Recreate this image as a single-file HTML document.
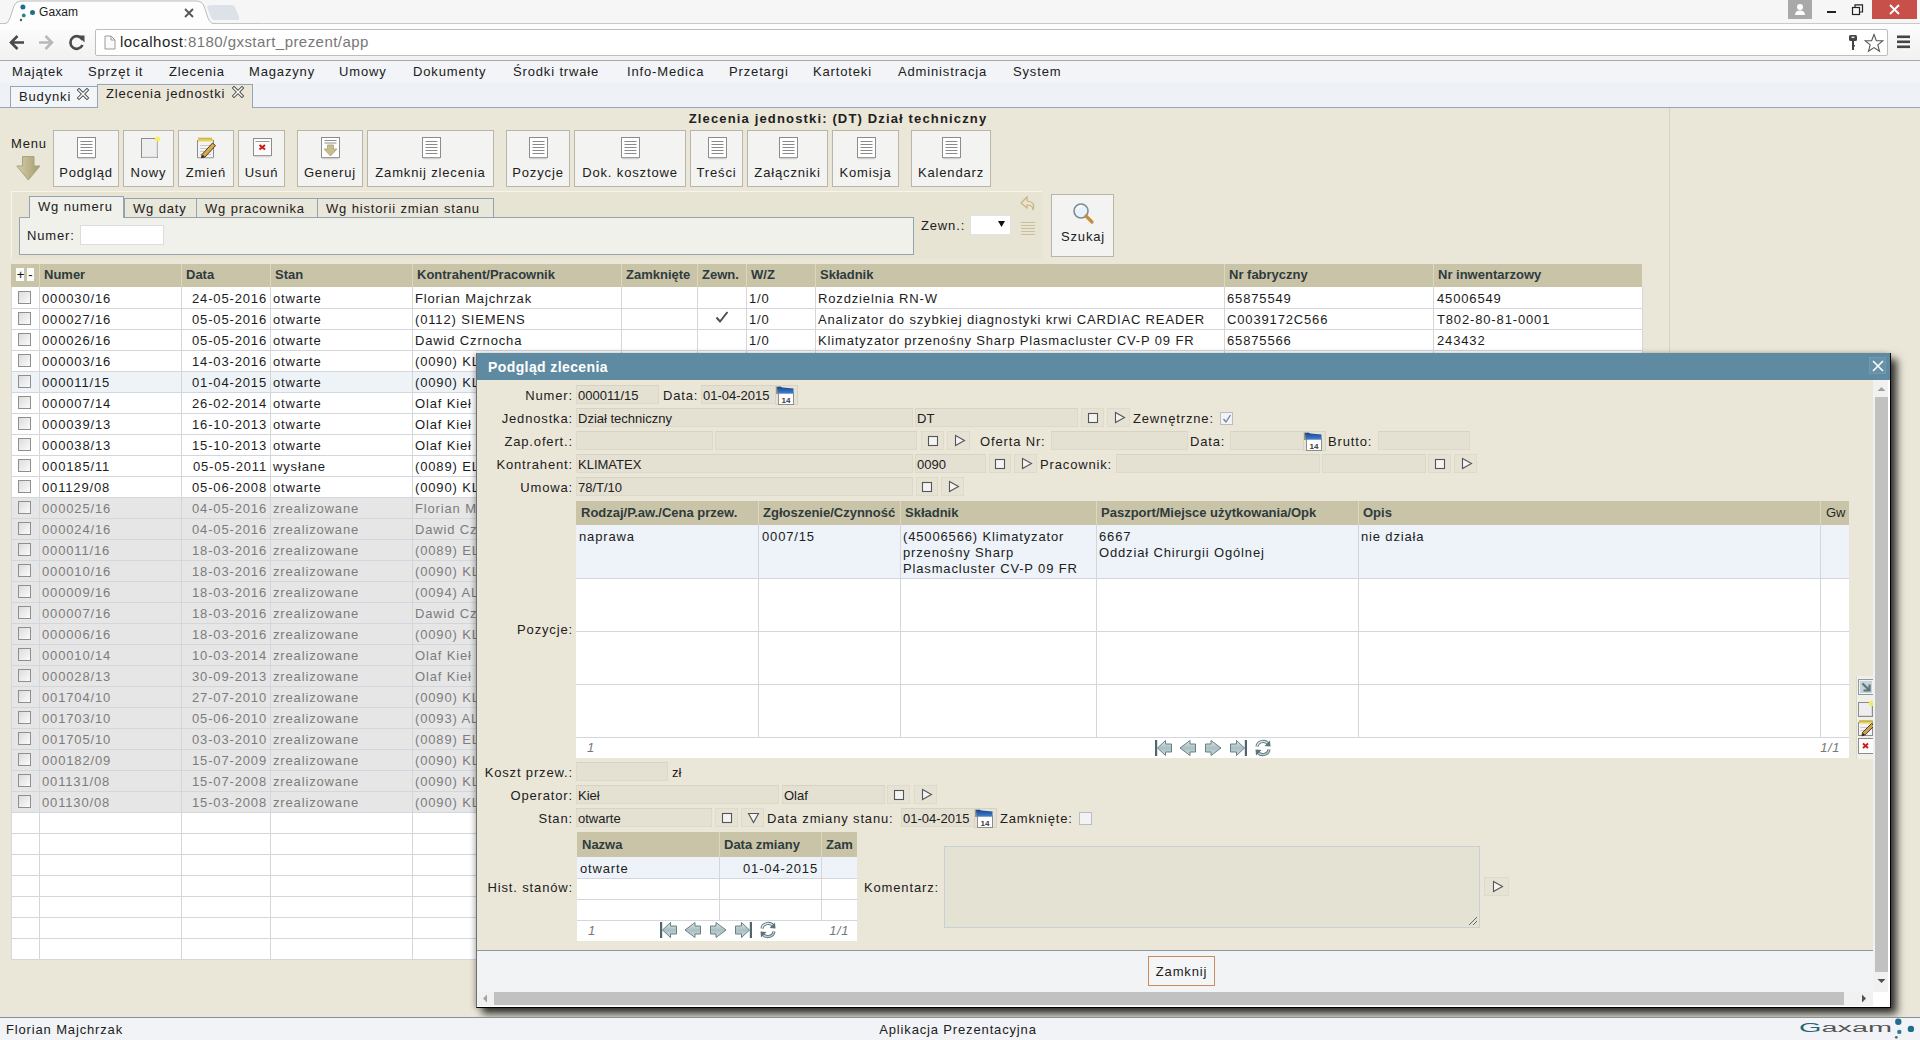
<!DOCTYPE html><html><head><meta charset="utf-8"><title>Gaxam</title><style>
*{margin:0;padding:0;box-sizing:border-box}
html,body{width:1920px;height:1040px;overflow:hidden;background:#ebe7d8;font-family:"Liberation Sans",sans-serif}
.a{position:absolute}
.t{position:absolute;white-space:nowrap;font-size:13px;line-height:16px;color:#202020}
.v{letter-spacing:.85px}
.ar{letter-spacing:0}
.hb{font-weight:bold;color:#2f3b3c;letter-spacing:0}
.g{color:#808080}
svg{position:absolute;overflow:visible}
</style></head><body>
<div class="a" style="left:0px;top:0px;width:1920px;height:60px;background:#f6f6f6"></div>
<div class="a" style="left:0px;top:23px;width:1920px;height:38px;background:linear-gradient(#fdfdfd,#f1f1f1);border-top:1px solid #c9c9c9"></div>
<svg style="left:0;top:0" width="260" height="30"><path d="M0 24 L4 24 Q8 24 10 18 L14 6 Q16 1 22 1 L196 1 Q202 1 204 6 L208 18 Q210 24 216 24 L260 24" fill="#fdfdfd" stroke="#bdbdbd" stroke-width="1"/><rect x="0" y="24" width="260" height="6" fill="#fdfdfd"/><path d="M207 7 Q208 5 211 5 L231 5 Q234 5 235 7 L239 17 Q240 20 237 20 L215 20 Q212 20 211 17 Z" fill="#dde1e8"/></svg>
<svg style="left:18;top:2" width="20" height="22"><circle cx="4.9" cy="5.1" r="2.5" fill="#1f6e8c"/><circle cx="14.5" cy="10.5" r="2.5" fill="#1f6e8c"/><circle cx="5.75" cy="13.4" r="1.9" fill="#2b7f90"/><circle cx="3" cy="18" r="1.2" fill="#555"/></svg>
<div class="t" style="left:39px;top:5px;font-size:12px;line-height:14px;color:#222;letter-spacing:.1px">Gaxam</div>
<svg style="left:183;top:7" width="12" height="12"><path d="M2 2 L10 10 M10 2 L2 10" stroke="#555" stroke-width="1.8"/></svg>
<div class="a" style="left:1788px;top:0px;width:24px;height:19px;background:#a9a9a9"></div>
<svg style="left:1794;top:3" width="12" height="13"><circle cx="6" cy="4" r="3" fill="#fff"/><path d="M1 12 Q1 7.5 6 7.5 Q11 7.5 11 12 Z" fill="#fff"/></svg>
<div class="a" style="left:1827px;top:11px;width:9px;height:2px;background:#222"></div>
<svg style="left:1852;top:4" width="12" height="12"><rect x="0.5" y="3.5" width="7" height="7" fill="none" stroke="#222" stroke-width="1.2"/><path d="M3 3.5 V0.8 H10.5 V8 H8" fill="none" stroke="#222" stroke-width="1.2"/></svg>
<div class="a" style="left:1872px;top:0px;width:45px;height:19px;background:#c7504b"></div>
<svg style="left:1889;top:4" width="12" height="11"><path d="M1 1 L10 10 M10 1 L1 10" stroke="#fff" stroke-width="1.8"/></svg>
<svg style="left:8;top:33" width="80" height="20"><path d="M3 9.5 H16 M9.5 3 L3 9.5 L9.5 16" fill="none" stroke="#4a4a4a" stroke-width="2.6"/><path d="M31 9.5 H44 M37.5 3 L44 9.5 L37.5 16" fill="none" stroke="#b9b9b9" stroke-width="2.6"/><path d="M79.5 7 A6.3 6.3 0 1 0 79.5 12" fill="none" stroke="#4a4a4a" stroke-width="2.6" transform="translate(-5,0)"/><path d="M70 2 L77 2 L77 9 Z" fill="#4a4a4a" transform="translate(-0.5,0.5)"/></svg>
<div class="a" style="left:95px;top:29px;width:1793px;height:27px;background:#fff;border:1px solid #bdbdbd;border-radius:2px"></div>
<svg style="left:104;top:35" width="12" height="15"><path d="M1 1 H7 L11 5 V14 H1 Z M7 1 V5 H11" fill="#fafafa" stroke="#9a9a9a" stroke-width="1"/></svg>
<div class="t" style="left:120px;top:33px;font-size:15px;line-height:18px;color:#222;letter-spacing:.45px">localhost<span style="color:#777">:8180/gxstart_prezent/app</span></div>
<svg style="left:1846;top:34" width="14" height="18"><rect x="3" y="1" width="8" height="6" rx="1.5" fill="#444"/><rect x="5.5" y="2.5" width="3" height="1.6" fill="#ddd"/><rect x="6" y="7" width="2" height="9" fill="#444"/><rect x="7" y="11" width="2" height="1.5" fill="#444"/></svg>
<svg style="left:1864;top:33" width="20" height="20"><path d="M10 1.5 L12.4 7.6 L18.8 7.8 L13.8 11.9 L15.5 18.2 L10 14.6 L4.5 18.2 L6.2 11.9 L1.2 7.8 L7.6 7.6 Z" fill="#fff" stroke="#555" stroke-width="1.1"/></svg>
<svg style="left:1897;top:35" width="14" height="14"><rect x="0" y="0.5" width="13" height="2.6" fill="#444"/><rect x="0" y="5.5" width="13" height="2.6" fill="#444"/><rect x="0" y="10.5" width="13" height="2.6" fill="#444"/></svg>
<div class="a" style="left:0px;top:60px;width:1920px;height:1px;background:#a9a9a9"></div>
<div class="a" style="left:0px;top:61px;width:1920px;height:22px;background:#f2f4f7"></div>
<div class="t v" style="left:12px;top:63.70px;">Majątek</div>
<div class="t v" style="left:88px;top:63.70px;">Sprzęt it</div>
<div class="t v" style="left:169px;top:63.70px;">Zlecenia</div>
<div class="t v" style="left:249px;top:63.70px;">Magazyny</div>
<div class="t v" style="left:339px;top:63.70px;">Umowy</div>
<div class="t v" style="left:413px;top:63.70px;">Dokumenty</div>
<div class="t v" style="left:513px;top:63.70px;">Środki trwałe</div>
<div class="t v" style="left:627px;top:63.70px;">Info-Medica</div>
<div class="t v" style="left:729px;top:63.70px;">Przetargi</div>
<div class="t v" style="left:813px;top:63.70px;">Kartoteki</div>
<div class="t v" style="left:898px;top:63.70px;">Administracja</div>
<div class="t v" style="left:1013px;top:63.70px;">System</div>
<div class="a" style="left:0px;top:83px;width:1920px;height:25px;background:#eef2f7;border-bottom:1px solid #97a6b4"></div>
<div class="a" style="left:10px;top:86px;width:88px;height:22px;background:#f3f6f9;border:1px solid #97a6b4"></div>
<div class="t v" style="left:19px;top:88.70px;">Budynki</div>
<div class="a" style="left:97px;top:84px;width:156px;height:24px;background:#ebe7d8;border:1px solid #97a6b4;border-bottom:none"></div>
<div class="t v" style="left:106px;top:85.70px;">Zlecenia jednostki</div>
<svg style="left:77;top:88" width="13" height="13"><path d="M2 2 L10 10 M10 2 L2 10" stroke="#444" stroke-width="3.2" stroke-linecap="square"/><path d="M2 2 L10 10 M10 2 L2 10" stroke="#fff" stroke-width="1.5" stroke-linecap="square"/></svg>
<svg style="left:232;top:86" width="13" height="13"><path d="M2 2 L10 10 M10 2 L2 10" stroke="#444" stroke-width="3.2" stroke-linecap="square"/><path d="M2 2 L10 10 M10 2 L2 10" stroke="#fff" stroke-width="1.5" stroke-linecap="square"/></svg>
<div class="a" style="left:1669px;top:108px;width:1px;height:899px;background:#d6d2c3"></div>
<div class="t v" style="left:588.0px;width:500px;top:110.70px;text-align:center;font-weight:bold;letter-spacing:1.15px">Zlecenia jednostki: (DT) Dział techniczny</div>
<div class="t v" style="left:11px;top:135.70px;">Menu</div>
<svg style="left:16;top:155" width="26" height="27"><defs><linearGradient id="ag" x1="0" x2="1"><stop offset="0" stop-color="#d8cfa9"/><stop offset="1" stop-color="#a39a6f"/></linearGradient></defs><path d="M6.5 1.5 H18 V11 H24 L12.3 25 L0.8 11 H6.5 Z" fill="url(#ag)" stroke="#a9a27f" stroke-width="1"/></svg>
<div class="a" style="left:53px;top:130px;width:66px;height:57px;background:#f3f3f1;border:1px solid #b9b6a9"></div>
<svg style="left:76.0;top:137" width="22" height="24"><rect x="1.5" y="0.5" width="18" height="20" fill="#fff" stroke="#8c8c8c"/><path d="M2 21.5 H19" stroke="#cfcfcf" stroke-width="1.5"/><path d="M4.5 4.5 H16.5" stroke="#8a8a8a" stroke-width="1"/><path d="M4.5 7.5 H16.5" stroke="#8a8a8a" stroke-width="1"/><path d="M4.5 10.5 H16.5" stroke="#8a8a8a" stroke-width="1"/><path d="M4.5 13.5 H16.5" stroke="#8a8a8a" stroke-width="1"/><path d="M4.5 16.5 H16.5" stroke="#8a8a8a" stroke-width="1"/></svg>
<div class="t v" style="left:53.0px;width:66px;top:164.70px;text-align:center;">Podgląd</div>
<div class="a" style="left:123px;top:130px;width:51px;height:57px;background:#f3f3f1;border:1px solid #b9b6a9"></div>
<svg style="left:138.5;top:137" width="22" height="24"><rect x="2.5" y="1.5" width="16" height="19" fill="#eeeeee" stroke="#8c8c8c"/><path d="M3 20 L18 20 L18 5" fill="none" stroke="#d5d5d5"/><circle cx="18.5" cy="2" r="2.6" fill="#f7ef6a"/></svg>
<div class="t v" style="left:123.0px;width:51px;top:164.70px;text-align:center;">Nowy</div>
<div class="a" style="left:178px;top:130px;width:56px;height:57px;background:#f3f3f1;border:1px solid #b9b6a9"></div>
<svg style="left:196.0;top:137" width="22" height="24"><rect x="1.5" y="3.5" width="16" height="17" fill="#f4f4f4" stroke="#8c8c8c"/><path d="M2 21 H18" stroke="#c8c8c8" stroke-width="1.2"/><path d="M4 8.5 H15" stroke="#c9c9c9" stroke-width="1"/><path d="M4 11.5 H15" stroke="#c9c9c9" stroke-width="1"/><path d="M4 14.5 H15" stroke="#c9c9c9" stroke-width="1"/><path d="M4 17.5 H15" stroke="#c9c9c9" stroke-width="1"/><rect x="2" y="2" width="15" height="2.5" fill="#e8d35a"/><circle cx="3" cy="1.6" r="1" fill="#c8b23a"/><circle cx="5" cy="1.6" r="1" fill="#c8b23a"/><circle cx="7" cy="1.6" r="1" fill="#c8b23a"/><circle cx="9" cy="1.6" r="1" fill="#c8b23a"/><circle cx="11" cy="1.6" r="1" fill="#c8b23a"/><circle cx="13" cy="1.6" r="1" fill="#c8b23a"/><circle cx="15" cy="1.6" r="1" fill="#c8b23a"/><path d="M6 17.5 L16.5 6 L19.5 8.6 L9 20 L5.5 20.8 Z" fill="#d9a94e" stroke="#4a3a22" stroke-width="1"/><path d="M5.5 20.8 L6.8 17.8 L8.5 19.4 Z" fill="#222"/></svg>
<div class="t v" style="left:178.0px;width:56px;top:164.70px;text-align:center;">Zmień</div>
<div class="a" style="left:238px;top:130px;width:47px;height:57px;background:#f3f3f1;border:1px solid #b9b6a9"></div>
<svg style="left:251.5;top:137" width="22" height="24"><rect x="1.5" y="1.5" width="18" height="17" fill="#fbfbfb" stroke="#8c8c8c"/><path d="M2 19.5 H19" stroke="#d5d5d5" stroke-width="1.5"/><path d="M3.5 4.5 H17.5" stroke="#9a9a9a" stroke-width="1"/><path d="M7.5 8 L13 12.5 M13 8 L7.5 12.5" stroke="#d01818" stroke-width="2"/></svg>
<div class="t v" style="left:238.0px;width:47px;top:164.70px;text-align:center;">Usuń</div>
<div class="a" style="left:297px;top:130px;width:66px;height:57px;background:#f3f3f1;border:1px solid #b9b6a9"></div>
<svg style="left:320.0;top:137" width="22" height="24"><rect x="1.5" y="0.5" width="18" height="20" fill="#fff" stroke="#8c8c8c"/><path d="M2 21.5 H19" stroke="#cfcfcf" stroke-width="1.5"/><path d="M4.5 3.5 H16.5 M4.5 6 H16.5" stroke="#8a8a8a"/><path d="M7.5 8 H13.5 V12 H17 L10.5 19 L4 12 H7.5 Z" fill="#c8bd8e" stroke="#a9a07a" stroke-width="0.8"/></svg>
<div class="t v" style="left:297.0px;width:66px;top:164.70px;text-align:center;">Generuj</div>
<div class="a" style="left:367px;top:130px;width:127px;height:57px;background:#f3f3f1;border:1px solid #b9b6a9"></div>
<svg style="left:420.5;top:137" width="22" height="24"><rect x="1.5" y="0.5" width="18" height="20" fill="#fff" stroke="#8c8c8c"/><path d="M2 21.5 H19" stroke="#cfcfcf" stroke-width="1.5"/><path d="M4.5 4.5 H16.5" stroke="#8a8a8a" stroke-width="1"/><path d="M4.5 7.5 H16.5" stroke="#8a8a8a" stroke-width="1"/><path d="M4.5 10.5 H16.5" stroke="#8a8a8a" stroke-width="1"/><path d="M4.5 13.5 H16.5" stroke="#8a8a8a" stroke-width="1"/><path d="M4.5 16.5 H16.5" stroke="#8a8a8a" stroke-width="1"/></svg>
<div class="t v" style="left:367.0px;width:127px;top:164.70px;text-align:center;">Zamknij zlecenia</div>
<div class="a" style="left:506px;top:130px;width:64px;height:57px;background:#f3f3f1;border:1px solid #b9b6a9"></div>
<svg style="left:528.0;top:137" width="22" height="24"><rect x="1.5" y="0.5" width="18" height="20" fill="#fff" stroke="#8c8c8c"/><path d="M2 21.5 H19" stroke="#cfcfcf" stroke-width="1.5"/><path d="M4.5 4.5 H16.5" stroke="#8a8a8a" stroke-width="1"/><path d="M4.5 7.5 H16.5" stroke="#8a8a8a" stroke-width="1"/><path d="M4.5 10.5 H16.5" stroke="#8a8a8a" stroke-width="1"/><path d="M4.5 13.5 H16.5" stroke="#8a8a8a" stroke-width="1"/><path d="M4.5 16.5 H16.5" stroke="#8a8a8a" stroke-width="1"/></svg>
<div class="t v" style="left:506.0px;width:64px;top:164.70px;text-align:center;">Pozycje</div>
<div class="a" style="left:574px;top:130px;width:112px;height:57px;background:#f3f3f1;border:1px solid #b9b6a9"></div>
<svg style="left:620.0;top:137" width="22" height="24"><rect x="1.5" y="0.5" width="18" height="20" fill="#fff" stroke="#8c8c8c"/><path d="M2 21.5 H19" stroke="#cfcfcf" stroke-width="1.5"/><path d="M4.5 4.5 H16.5" stroke="#8a8a8a" stroke-width="1"/><path d="M4.5 7.5 H16.5" stroke="#8a8a8a" stroke-width="1"/><path d="M4.5 10.5 H16.5" stroke="#8a8a8a" stroke-width="1"/><path d="M4.5 13.5 H16.5" stroke="#8a8a8a" stroke-width="1"/><path d="M4.5 16.5 H16.5" stroke="#8a8a8a" stroke-width="1"/></svg>
<div class="t v" style="left:574.0px;width:112px;top:164.70px;text-align:center;">Dok. kosztowe</div>
<div class="a" style="left:690px;top:130px;width:53px;height:57px;background:#f3f3f1;border:1px solid #b9b6a9"></div>
<svg style="left:706.5;top:137" width="22" height="24"><rect x="1.5" y="0.5" width="18" height="20" fill="#fff" stroke="#8c8c8c"/><path d="M2 21.5 H19" stroke="#cfcfcf" stroke-width="1.5"/><path d="M4.5 4.5 H16.5" stroke="#8a8a8a" stroke-width="1"/><path d="M4.5 7.5 H16.5" stroke="#8a8a8a" stroke-width="1"/><path d="M4.5 10.5 H16.5" stroke="#8a8a8a" stroke-width="1"/><path d="M4.5 13.5 H16.5" stroke="#8a8a8a" stroke-width="1"/><path d="M4.5 16.5 H16.5" stroke="#8a8a8a" stroke-width="1"/></svg>
<div class="t v" style="left:690.0px;width:53px;top:164.70px;text-align:center;">Treści</div>
<div class="a" style="left:747px;top:130px;width:81px;height:57px;background:#f3f3f1;border:1px solid #b9b6a9"></div>
<svg style="left:777.5;top:137" width="22" height="24"><rect x="1.5" y="0.5" width="18" height="20" fill="#fff" stroke="#8c8c8c"/><path d="M2 21.5 H19" stroke="#cfcfcf" stroke-width="1.5"/><path d="M4.5 4.5 H16.5" stroke="#8a8a8a" stroke-width="1"/><path d="M4.5 7.5 H16.5" stroke="#8a8a8a" stroke-width="1"/><path d="M4.5 10.5 H16.5" stroke="#8a8a8a" stroke-width="1"/><path d="M4.5 13.5 H16.5" stroke="#8a8a8a" stroke-width="1"/><path d="M4.5 16.5 H16.5" stroke="#8a8a8a" stroke-width="1"/></svg>
<div class="t v" style="left:747.0px;width:81px;top:164.70px;text-align:center;">Załączniki</div>
<div class="a" style="left:832px;top:130px;width:67px;height:57px;background:#f3f3f1;border:1px solid #b9b6a9"></div>
<svg style="left:855.5;top:137" width="22" height="24"><rect x="1.5" y="0.5" width="18" height="20" fill="#fff" stroke="#8c8c8c"/><path d="M2 21.5 H19" stroke="#cfcfcf" stroke-width="1.5"/><path d="M4.5 4.5 H16.5" stroke="#8a8a8a" stroke-width="1"/><path d="M4.5 7.5 H16.5" stroke="#8a8a8a" stroke-width="1"/><path d="M4.5 10.5 H16.5" stroke="#8a8a8a" stroke-width="1"/><path d="M4.5 13.5 H16.5" stroke="#8a8a8a" stroke-width="1"/><path d="M4.5 16.5 H16.5" stroke="#8a8a8a" stroke-width="1"/></svg>
<div class="t v" style="left:832.0px;width:67px;top:164.70px;text-align:center;">Komisja</div>
<div class="a" style="left:911px;top:130px;width:80px;height:57px;background:#f3f3f1;border:1px solid #b9b6a9"></div>
<svg style="left:941.0;top:137" width="22" height="24"><rect x="1.5" y="0.5" width="18" height="20" fill="#fff" stroke="#8c8c8c"/><path d="M2 21.5 H19" stroke="#cfcfcf" stroke-width="1.5"/><path d="M4.5 4.5 H16.5" stroke="#8a8a8a" stroke-width="1"/><path d="M4.5 7.5 H16.5" stroke="#8a8a8a" stroke-width="1"/><path d="M4.5 10.5 H16.5" stroke="#8a8a8a" stroke-width="1"/><path d="M4.5 13.5 H16.5" stroke="#8a8a8a" stroke-width="1"/><path d="M4.5 16.5 H16.5" stroke="#8a8a8a" stroke-width="1"/></svg>
<div class="t v" style="left:911.0px;width:80px;top:164.70px;text-align:center;">Kalendarz</div>
<div class="a" style="left:11px;top:191px;width:1031px;height:68px;background:#e8e4d4;border-top:1px solid #f6f4ec;border-left:1px solid #f6f4ec"></div>
<div class="a" style="left:19px;top:217px;width:895px;height:38px;background:#f1f1ec;border:1px solid #94a3b1"></div>
<div class="a" style="left:29px;top:196px;width:95px;height:22px;background:#f1f1ec;border:1px solid #94a3b1;border-bottom:none"></div>
<div class="t v" style="left:38px;top:198.70px;">Wg numeru</div>
<div class="a" style="left:124px;top:198px;width:73px;height:19px;background:#e9e6da;border:1px solid #94a3b1;border-bottom:none"></div>
<div class="t v" style="left:133px;top:200.70px;">Wg daty</div>
<div class="a" style="left:196px;top:198px;width:122px;height:19px;background:#e9e6da;border:1px solid #94a3b1;border-bottom:none"></div>
<div class="t v" style="left:205px;top:200.70px;">Wg pracownika</div>
<div class="a" style="left:317px;top:198px;width:177px;height:19px;background:#e9e6da;border:1px solid #94a3b1;border-bottom:none"></div>
<div class="t v" style="left:326px;top:200.70px;">Wg historii zmian stanu</div>
<div class="t v" style="left:27px;top:227.70px;">Numer:</div>
<div class="a" style="left:80px;top:225px;width:84px;height:20px;background:#fff;border:1px solid #dcdcdc"></div>
<div class="t v" style="left:921px;top:217.70px;">Zewn.:</div>
<div class="a" style="left:970px;top:215px;width:41px;height:20px;background:#fff;border:1px solid #e2e2e2"></div>
<svg style="left:998;top:221" width="8" height="7"><path d="M0 0 H7 L3.5 6 Z" fill="#111"/></svg>
<svg style="left:1018;top:195" width="20" height="20"><path d="M9 2 L3 8 L9 13 V10 Q15 10 15 15 Q18 7 9 6 Z" fill="#efe4c8" stroke="#c7b48a" stroke-width="1.2"/></svg>
<svg style="left:1020;top:220" width="16" height="16"><path d="M1 2.5 H15" stroke="#cbbf97" stroke-width="1"/><path d="M1 5.5 H15" stroke="#cbbf97" stroke-width="1"/><path d="M1 8.5 H15" stroke="#cbbf97" stroke-width="1"/><path d="M1 11.5 H15" stroke="#cbbf97" stroke-width="1"/><path d="M1 14.5 H15" stroke="#cbbf97" stroke-width="1"/></svg>
<div class="a" style="left:1051px;top:194px;width:63px;height:63px;background:#f3f3f1;border:1px solid #b9b6a9"></div>
<svg style="left:1072;top:202" width="24" height="24"><circle cx="9" cy="9" r="7" fill="#e8f2fa" stroke="#7b8a96" stroke-width="1.6"/><path d="M5 7 Q7 4 10 4" stroke="#fff" stroke-width="1.5" fill="none"/><path d="M14 14 L20 20" stroke="#c98a3c" stroke-width="3.2" stroke-linecap="round"/></svg>
<div class="t v" style="left:1052.0px;width:62px;top:228.70px;text-align:center;">Szukaj</div>
<div class="a" style="left:11px;top:264px;width:1631px;height:23px;background:#c9c4a8"></div>
<div class="a" style="left:39px;top:264px;width:1px;height:23px;background:#dcd7c0"></div>
<div class="a" style="left:181px;top:264px;width:1px;height:23px;background:#dcd7c0"></div>
<div class="a" style="left:270px;top:264px;width:1px;height:23px;background:#dcd7c0"></div>
<div class="a" style="left:412px;top:264px;width:1px;height:23px;background:#dcd7c0"></div>
<div class="a" style="left:621px;top:264px;width:1px;height:23px;background:#dcd7c0"></div>
<div class="a" style="left:697px;top:264px;width:1px;height:23px;background:#dcd7c0"></div>
<div class="a" style="left:746px;top:264px;width:1px;height:23px;background:#dcd7c0"></div>
<div class="a" style="left:815px;top:264px;width:1px;height:23px;background:#dcd7c0"></div>
<div class="a" style="left:1224px;top:264px;width:1px;height:23px;background:#dcd7c0"></div>
<div class="a" style="left:1433px;top:264px;width:1px;height:23px;background:#dcd7c0"></div>
<div class="a" style="left:15px;top:267px;width:10px;height:15px;background:#fafaf7;border:1px solid #c9c4ae"></div>
<div class="a" style="left:26px;top:267px;width:9px;height:15px;background:#fafaf7;border:1px solid #c9c4ae"></div>
<div class="t ar" style="left:15.5px;top:266.70px;font-size:13px;color:#111;width:10px;text-align:center">+</div>
<div class="t ar" style="left:26px;top:266.70px;font-size:13px;color:#111;width:9px;text-align:center">-</div>
<div class="t hb" style="left:44px;top:266.70px;">Numer</div>
<div class="t hb" style="left:186px;top:266.70px;">Data</div>
<div class="t hb" style="left:275px;top:266.70px;">Stan</div>
<div class="t hb" style="left:417px;top:266.70px;">Kontrahent/Pracownik</div>
<div class="t hb" style="left:626px;top:266.70px;">Zamknięte</div>
<div class="t hb" style="left:702px;top:266.70px;">Zewn.</div>
<div class="t hb" style="left:751px;top:266.70px;">W/Z</div>
<div class="t hb" style="left:820px;top:266.70px;">Składnik</div>
<div class="t hb" style="left:1229px;top:266.70px;">Nr fabryczny</div>
<div class="t hb" style="left:1438px;top:266.70px;">Nr inwentarzowy</div>
<div class="a" style="left:11px;top:287px;width:1631px;height:672px;background:#fff"></div>
<div class="a" style="left:11px;top:287px;width:1631px;height:21px;background:#fff"></div>
<div class="a" style="left:18px;top:291px;width:13px;height:13px;border:1px solid #8f8f8f;background:linear-gradient(135deg,#dcdcdc,#fbfbfb)"></div>
<div class="t v" style="left:42px;top:290.70px;color:#1b1b1b">000030/16</div>
<div class="t v" style="right:1653px;top:290.70px;text-align:right;color:#1b1b1b">24-05-2016</div>
<div class="t v" style="left:273px;top:290.70px;color:#1b1b1b">otwarte</div>
<div class="t v" style="left:415px;top:290.70px;color:#1b1b1b">Florian Majchrzak</div>
<div class="t v" style="left:749px;top:290.70px;color:#1b1b1b">1/0</div>
<div class="t v" style="left:818px;top:290.70px;color:#1b1b1b">Rozdzielnia RN-W</div>
<div class="t v" style="left:1227px;top:290.70px;color:#1b1b1b">65875549</div>
<div class="t v" style="left:1437px;top:290.70px;color:#1b1b1b">45006549</div>
<div class="a" style="left:11px;top:308px;width:1631px;height:21px;background:#fff"></div>
<div class="a" style="left:18px;top:312px;width:13px;height:13px;border:1px solid #8f8f8f;background:linear-gradient(135deg,#dcdcdc,#fbfbfb)"></div>
<div class="t v" style="left:42px;top:311.70px;color:#1b1b1b">000027/16</div>
<div class="t v" style="right:1653px;top:311.70px;text-align:right;color:#1b1b1b">05-05-2016</div>
<div class="t v" style="left:273px;top:311.70px;color:#1b1b1b">otwarte</div>
<div class="t v" style="left:415px;top:311.70px;color:#1b1b1b">(0112) SIEMENS</div>
<svg style="left:715;top:311" width="14" height="12"><path d="M1.5 6.5 L5 10.5 L12.5 1" fill="none" stroke="#505050" stroke-width="2"/></svg>
<div class="t v" style="left:749px;top:311.70px;color:#1b1b1b">1/0</div>
<div class="t v" style="left:818px;top:311.70px;color:#1b1b1b">Analizator do szybkiej diagnostyki krwi CARDIAC READER</div>
<div class="t v" style="left:1227px;top:311.70px;color:#1b1b1b">C0039172C566</div>
<div class="t v" style="left:1437px;top:311.70px;color:#1b1b1b">T802-80-81-0001</div>
<div class="a" style="left:11px;top:329px;width:1631px;height:21px;background:#fff"></div>
<div class="a" style="left:18px;top:333px;width:13px;height:13px;border:1px solid #8f8f8f;background:linear-gradient(135deg,#dcdcdc,#fbfbfb)"></div>
<div class="t v" style="left:42px;top:332.70px;color:#1b1b1b">000026/16</div>
<div class="t v" style="right:1653px;top:332.70px;text-align:right;color:#1b1b1b">05-05-2016</div>
<div class="t v" style="left:273px;top:332.70px;color:#1b1b1b">otwarte</div>
<div class="t v" style="left:415px;top:332.70px;color:#1b1b1b">Dawid Czrnocha</div>
<div class="t v" style="left:749px;top:332.70px;color:#1b1b1b">1/0</div>
<div class="t v" style="left:818px;top:332.70px;color:#1b1b1b">Klimatyzator przenośny Sharp Plasmacluster CV-P 09 FR</div>
<div class="t v" style="left:1227px;top:332.70px;color:#1b1b1b">65875566</div>
<div class="t v" style="left:1437px;top:332.70px;color:#1b1b1b">243432</div>
<div class="a" style="left:11px;top:350px;width:1631px;height:21px;background:#fff"></div>
<div class="a" style="left:18px;top:354px;width:13px;height:13px;border:1px solid #8f8f8f;background:linear-gradient(135deg,#dcdcdc,#fbfbfb)"></div>
<div class="t v" style="left:42px;top:353.70px;color:#1b1b1b">000003/16</div>
<div class="t v" style="right:1653px;top:353.70px;text-align:right;color:#1b1b1b">14-03-2016</div>
<div class="t v" style="left:273px;top:353.70px;color:#1b1b1b">otwarte</div>
<div class="t v" style="left:415px;top:353.70px;color:#1b1b1b">(0090) KLIMATEX</div>
<div class="t v" style="left:749px;top:353.70px;color:#1b1b1b">1/0</div>
<div class="t v" style="left:818px;top:353.70px;color:#1b1b1b"></div>
<div class="t v" style="left:1227px;top:353.70px;color:#1b1b1b"></div>
<div class="t v" style="left:1437px;top:353.70px;color:#1b1b1b"></div>
<div class="a" style="left:11px;top:371px;width:1631px;height:21px;background:#eef3f7"></div>
<div class="a" style="left:18px;top:375px;width:13px;height:13px;border:1px solid #8f8f8f;background:linear-gradient(135deg,#dcdcdc,#fbfbfb)"></div>
<div class="t v" style="left:42px;top:374.70px;color:#1b1b1b">000011/15</div>
<div class="t v" style="right:1653px;top:374.70px;text-align:right;color:#1b1b1b">01-04-2015</div>
<div class="t v" style="left:273px;top:374.70px;color:#1b1b1b">otwarte</div>
<div class="t v" style="left:415px;top:374.70px;color:#1b1b1b">(0090) KLIMATEX</div>
<div class="t v" style="left:749px;top:374.70px;color:#1b1b1b">1/0</div>
<div class="t v" style="left:818px;top:374.70px;color:#1b1b1b"></div>
<div class="t v" style="left:1227px;top:374.70px;color:#1b1b1b"></div>
<div class="t v" style="left:1437px;top:374.70px;color:#1b1b1b"></div>
<div class="a" style="left:11px;top:392px;width:1631px;height:21px;background:#fff"></div>
<div class="a" style="left:18px;top:396px;width:13px;height:13px;border:1px solid #8f8f8f;background:linear-gradient(135deg,#dcdcdc,#fbfbfb)"></div>
<div class="t v" style="left:42px;top:395.70px;color:#1b1b1b">000007/14</div>
<div class="t v" style="right:1653px;top:395.70px;text-align:right;color:#1b1b1b">26-02-2014</div>
<div class="t v" style="left:273px;top:395.70px;color:#1b1b1b">otwarte</div>
<div class="t v" style="left:415px;top:395.70px;color:#1b1b1b">Olaf Kieł</div>
<div class="t v" style="left:749px;top:395.70px;color:#1b1b1b">1/0</div>
<div class="t v" style="left:818px;top:395.70px;color:#1b1b1b"></div>
<div class="t v" style="left:1227px;top:395.70px;color:#1b1b1b"></div>
<div class="t v" style="left:1437px;top:395.70px;color:#1b1b1b"></div>
<div class="a" style="left:11px;top:413px;width:1631px;height:21px;background:#fff"></div>
<div class="a" style="left:18px;top:417px;width:13px;height:13px;border:1px solid #8f8f8f;background:linear-gradient(135deg,#dcdcdc,#fbfbfb)"></div>
<div class="t v" style="left:42px;top:416.70px;color:#1b1b1b">000039/13</div>
<div class="t v" style="right:1653px;top:416.70px;text-align:right;color:#1b1b1b">16-10-2013</div>
<div class="t v" style="left:273px;top:416.70px;color:#1b1b1b">otwarte</div>
<div class="t v" style="left:415px;top:416.70px;color:#1b1b1b">Olaf Kieł</div>
<div class="t v" style="left:749px;top:416.70px;color:#1b1b1b">1/0</div>
<div class="t v" style="left:818px;top:416.70px;color:#1b1b1b"></div>
<div class="t v" style="left:1227px;top:416.70px;color:#1b1b1b"></div>
<div class="t v" style="left:1437px;top:416.70px;color:#1b1b1b"></div>
<div class="a" style="left:11px;top:434px;width:1631px;height:21px;background:#fff"></div>
<div class="a" style="left:18px;top:438px;width:13px;height:13px;border:1px solid #8f8f8f;background:linear-gradient(135deg,#dcdcdc,#fbfbfb)"></div>
<div class="t v" style="left:42px;top:437.70px;color:#1b1b1b">000038/13</div>
<div class="t v" style="right:1653px;top:437.70px;text-align:right;color:#1b1b1b">15-10-2013</div>
<div class="t v" style="left:273px;top:437.70px;color:#1b1b1b">otwarte</div>
<div class="t v" style="left:415px;top:437.70px;color:#1b1b1b">Olaf Kieł</div>
<div class="t v" style="left:749px;top:437.70px;color:#1b1b1b">1/0</div>
<div class="t v" style="left:818px;top:437.70px;color:#1b1b1b"></div>
<div class="t v" style="left:1227px;top:437.70px;color:#1b1b1b"></div>
<div class="t v" style="left:1437px;top:437.70px;color:#1b1b1b"></div>
<div class="a" style="left:11px;top:455px;width:1631px;height:21px;background:#fff"></div>
<div class="a" style="left:18px;top:459px;width:13px;height:13px;border:1px solid #8f8f8f;background:linear-gradient(135deg,#dcdcdc,#fbfbfb)"></div>
<div class="t v" style="left:42px;top:458.70px;color:#1b1b1b">000185/11</div>
<div class="t v" style="right:1653px;top:458.70px;text-align:right;color:#1b1b1b">05-05-2011</div>
<div class="t v" style="left:273px;top:458.70px;color:#1b1b1b">wysłane</div>
<div class="t v" style="left:415px;top:458.70px;color:#1b1b1b">(0089) ELEKTRO</div>
<div class="t v" style="left:749px;top:458.70px;color:#1b1b1b">1/0</div>
<div class="t v" style="left:818px;top:458.70px;color:#1b1b1b"></div>
<div class="t v" style="left:1227px;top:458.70px;color:#1b1b1b"></div>
<div class="t v" style="left:1437px;top:458.70px;color:#1b1b1b"></div>
<div class="a" style="left:11px;top:476px;width:1631px;height:21px;background:#fff"></div>
<div class="a" style="left:18px;top:480px;width:13px;height:13px;border:1px solid #8f8f8f;background:linear-gradient(135deg,#dcdcdc,#fbfbfb)"></div>
<div class="t v" style="left:42px;top:479.70px;color:#1b1b1b">001129/08</div>
<div class="t v" style="right:1653px;top:479.70px;text-align:right;color:#1b1b1b">05-06-2008</div>
<div class="t v" style="left:273px;top:479.70px;color:#1b1b1b">otwarte</div>
<div class="t v" style="left:415px;top:479.70px;color:#1b1b1b">(0090) KLIMATEX</div>
<div class="t v" style="left:749px;top:479.70px;color:#1b1b1b">1/0</div>
<div class="t v" style="left:818px;top:479.70px;color:#1b1b1b"></div>
<div class="t v" style="left:1227px;top:479.70px;color:#1b1b1b"></div>
<div class="t v" style="left:1437px;top:479.70px;color:#1b1b1b"></div>
<div class="a" style="left:11px;top:497px;width:1631px;height:21px;background:#e6e6e6"></div>
<div class="a" style="left:18px;top:501px;width:13px;height:13px;border:1px solid #8f8f8f;background:linear-gradient(135deg,#dcdcdc,#fbfbfb)"></div>
<div class="t v" style="left:42px;top:500.70px;color:#7c7c7c">000025/16</div>
<div class="t v" style="right:1653px;top:500.70px;text-align:right;color:#7c7c7c">04-05-2016</div>
<div class="t v" style="left:273px;top:500.70px;color:#7c7c7c">zrealizowane</div>
<div class="t v" style="left:415px;top:500.70px;color:#7c7c7c">Florian Majchrzak</div>
<div class="t v" style="left:749px;top:500.70px;color:#7c7c7c"></div>
<div class="t v" style="left:818px;top:500.70px;color:#7c7c7c"></div>
<div class="t v" style="left:1227px;top:500.70px;color:#7c7c7c"></div>
<div class="t v" style="left:1437px;top:500.70px;color:#7c7c7c"></div>
<div class="a" style="left:11px;top:518px;width:1631px;height:21px;background:#e6e6e6"></div>
<div class="a" style="left:18px;top:522px;width:13px;height:13px;border:1px solid #8f8f8f;background:linear-gradient(135deg,#dcdcdc,#fbfbfb)"></div>
<div class="t v" style="left:42px;top:521.70px;color:#7c7c7c">000024/16</div>
<div class="t v" style="right:1653px;top:521.70px;text-align:right;color:#7c7c7c">04-05-2016</div>
<div class="t v" style="left:273px;top:521.70px;color:#7c7c7c">zrealizowane</div>
<div class="t v" style="left:415px;top:521.70px;color:#7c7c7c">Dawid Czrnocha</div>
<div class="t v" style="left:749px;top:521.70px;color:#7c7c7c"></div>
<div class="t v" style="left:818px;top:521.70px;color:#7c7c7c"></div>
<div class="t v" style="left:1227px;top:521.70px;color:#7c7c7c"></div>
<div class="t v" style="left:1437px;top:521.70px;color:#7c7c7c"></div>
<div class="a" style="left:11px;top:539px;width:1631px;height:21px;background:#e6e6e6"></div>
<div class="a" style="left:18px;top:543px;width:13px;height:13px;border:1px solid #8f8f8f;background:linear-gradient(135deg,#dcdcdc,#fbfbfb)"></div>
<div class="t v" style="left:42px;top:542.70px;color:#7c7c7c">000011/16</div>
<div class="t v" style="right:1653px;top:542.70px;text-align:right;color:#7c7c7c">18-03-2016</div>
<div class="t v" style="left:273px;top:542.70px;color:#7c7c7c">zrealizowane</div>
<div class="t v" style="left:415px;top:542.70px;color:#7c7c7c">(0089) ELEKTRO</div>
<div class="t v" style="left:749px;top:542.70px;color:#7c7c7c"></div>
<div class="t v" style="left:818px;top:542.70px;color:#7c7c7c"></div>
<div class="t v" style="left:1227px;top:542.70px;color:#7c7c7c"></div>
<div class="t v" style="left:1437px;top:542.70px;color:#7c7c7c"></div>
<div class="a" style="left:11px;top:560px;width:1631px;height:21px;background:#e6e6e6"></div>
<div class="a" style="left:18px;top:564px;width:13px;height:13px;border:1px solid #8f8f8f;background:linear-gradient(135deg,#dcdcdc,#fbfbfb)"></div>
<div class="t v" style="left:42px;top:563.70px;color:#7c7c7c">000010/16</div>
<div class="t v" style="right:1653px;top:563.70px;text-align:right;color:#7c7c7c">18-03-2016</div>
<div class="t v" style="left:273px;top:563.70px;color:#7c7c7c">zrealizowane</div>
<div class="t v" style="left:415px;top:563.70px;color:#7c7c7c">(0090) KLIMATEX</div>
<div class="t v" style="left:749px;top:563.70px;color:#7c7c7c"></div>
<div class="t v" style="left:818px;top:563.70px;color:#7c7c7c"></div>
<div class="t v" style="left:1227px;top:563.70px;color:#7c7c7c"></div>
<div class="t v" style="left:1437px;top:563.70px;color:#7c7c7c"></div>
<div class="a" style="left:11px;top:581px;width:1631px;height:21px;background:#e6e6e6"></div>
<div class="a" style="left:18px;top:585px;width:13px;height:13px;border:1px solid #8f8f8f;background:linear-gradient(135deg,#dcdcdc,#fbfbfb)"></div>
<div class="t v" style="left:42px;top:584.70px;color:#7c7c7c">000009/16</div>
<div class="t v" style="right:1653px;top:584.70px;text-align:right;color:#7c7c7c">18-03-2016</div>
<div class="t v" style="left:273px;top:584.70px;color:#7c7c7c">zrealizowane</div>
<div class="t v" style="left:415px;top:584.70px;color:#7c7c7c">(0094) ALMED</div>
<div class="t v" style="left:749px;top:584.70px;color:#7c7c7c"></div>
<div class="t v" style="left:818px;top:584.70px;color:#7c7c7c"></div>
<div class="t v" style="left:1227px;top:584.70px;color:#7c7c7c"></div>
<div class="t v" style="left:1437px;top:584.70px;color:#7c7c7c"></div>
<div class="a" style="left:11px;top:602px;width:1631px;height:21px;background:#e6e6e6"></div>
<div class="a" style="left:18px;top:606px;width:13px;height:13px;border:1px solid #8f8f8f;background:linear-gradient(135deg,#dcdcdc,#fbfbfb)"></div>
<div class="t v" style="left:42px;top:605.70px;color:#7c7c7c">000007/16</div>
<div class="t v" style="right:1653px;top:605.70px;text-align:right;color:#7c7c7c">18-03-2016</div>
<div class="t v" style="left:273px;top:605.70px;color:#7c7c7c">zrealizowane</div>
<div class="t v" style="left:415px;top:605.70px;color:#7c7c7c">Dawid Czrnocha</div>
<div class="t v" style="left:749px;top:605.70px;color:#7c7c7c"></div>
<div class="t v" style="left:818px;top:605.70px;color:#7c7c7c"></div>
<div class="t v" style="left:1227px;top:605.70px;color:#7c7c7c"></div>
<div class="t v" style="left:1437px;top:605.70px;color:#7c7c7c"></div>
<div class="a" style="left:11px;top:623px;width:1631px;height:21px;background:#e6e6e6"></div>
<div class="a" style="left:18px;top:627px;width:13px;height:13px;border:1px solid #8f8f8f;background:linear-gradient(135deg,#dcdcdc,#fbfbfb)"></div>
<div class="t v" style="left:42px;top:626.70px;color:#7c7c7c">000006/16</div>
<div class="t v" style="right:1653px;top:626.70px;text-align:right;color:#7c7c7c">18-03-2016</div>
<div class="t v" style="left:273px;top:626.70px;color:#7c7c7c">zrealizowane</div>
<div class="t v" style="left:415px;top:626.70px;color:#7c7c7c">(0090) KLIMATEX</div>
<div class="t v" style="left:749px;top:626.70px;color:#7c7c7c"></div>
<div class="t v" style="left:818px;top:626.70px;color:#7c7c7c"></div>
<div class="t v" style="left:1227px;top:626.70px;color:#7c7c7c"></div>
<div class="t v" style="left:1437px;top:626.70px;color:#7c7c7c"></div>
<div class="a" style="left:11px;top:644px;width:1631px;height:21px;background:#e6e6e6"></div>
<div class="a" style="left:18px;top:648px;width:13px;height:13px;border:1px solid #8f8f8f;background:linear-gradient(135deg,#dcdcdc,#fbfbfb)"></div>
<div class="t v" style="left:42px;top:647.70px;color:#7c7c7c">000010/14</div>
<div class="t v" style="right:1653px;top:647.70px;text-align:right;color:#7c7c7c">10-03-2014</div>
<div class="t v" style="left:273px;top:647.70px;color:#7c7c7c">zrealizowane</div>
<div class="t v" style="left:415px;top:647.70px;color:#7c7c7c">Olaf Kieł</div>
<div class="t v" style="left:749px;top:647.70px;color:#7c7c7c"></div>
<div class="t v" style="left:818px;top:647.70px;color:#7c7c7c"></div>
<div class="t v" style="left:1227px;top:647.70px;color:#7c7c7c"></div>
<div class="t v" style="left:1437px;top:647.70px;color:#7c7c7c"></div>
<div class="a" style="left:11px;top:665px;width:1631px;height:21px;background:#e6e6e6"></div>
<div class="a" style="left:18px;top:669px;width:13px;height:13px;border:1px solid #8f8f8f;background:linear-gradient(135deg,#dcdcdc,#fbfbfb)"></div>
<div class="t v" style="left:42px;top:668.70px;color:#7c7c7c">000028/13</div>
<div class="t v" style="right:1653px;top:668.70px;text-align:right;color:#7c7c7c">30-09-2013</div>
<div class="t v" style="left:273px;top:668.70px;color:#7c7c7c">zrealizowane</div>
<div class="t v" style="left:415px;top:668.70px;color:#7c7c7c">Olaf Kieł</div>
<div class="t v" style="left:749px;top:668.70px;color:#7c7c7c"></div>
<div class="t v" style="left:818px;top:668.70px;color:#7c7c7c"></div>
<div class="t v" style="left:1227px;top:668.70px;color:#7c7c7c"></div>
<div class="t v" style="left:1437px;top:668.70px;color:#7c7c7c"></div>
<div class="a" style="left:11px;top:686px;width:1631px;height:21px;background:#e6e6e6"></div>
<div class="a" style="left:18px;top:690px;width:13px;height:13px;border:1px solid #8f8f8f;background:linear-gradient(135deg,#dcdcdc,#fbfbfb)"></div>
<div class="t v" style="left:42px;top:689.70px;color:#7c7c7c">001704/10</div>
<div class="t v" style="right:1653px;top:689.70px;text-align:right;color:#7c7c7c">27-07-2010</div>
<div class="t v" style="left:273px;top:689.70px;color:#7c7c7c">zrealizowane</div>
<div class="t v" style="left:415px;top:689.70px;color:#7c7c7c">(0090) KLIMATEX</div>
<div class="t v" style="left:749px;top:689.70px;color:#7c7c7c"></div>
<div class="t v" style="left:818px;top:689.70px;color:#7c7c7c"></div>
<div class="t v" style="left:1227px;top:689.70px;color:#7c7c7c"></div>
<div class="t v" style="left:1437px;top:689.70px;color:#7c7c7c"></div>
<div class="a" style="left:11px;top:707px;width:1631px;height:21px;background:#e6e6e6"></div>
<div class="a" style="left:18px;top:711px;width:13px;height:13px;border:1px solid #8f8f8f;background:linear-gradient(135deg,#dcdcdc,#fbfbfb)"></div>
<div class="t v" style="left:42px;top:710.70px;color:#7c7c7c">001703/10</div>
<div class="t v" style="right:1653px;top:710.70px;text-align:right;color:#7c7c7c">05-06-2010</div>
<div class="t v" style="left:273px;top:710.70px;color:#7c7c7c">zrealizowane</div>
<div class="t v" style="left:415px;top:710.70px;color:#7c7c7c">(0093) ALMED</div>
<div class="t v" style="left:749px;top:710.70px;color:#7c7c7c"></div>
<div class="t v" style="left:818px;top:710.70px;color:#7c7c7c"></div>
<div class="t v" style="left:1227px;top:710.70px;color:#7c7c7c"></div>
<div class="t v" style="left:1437px;top:710.70px;color:#7c7c7c"></div>
<div class="a" style="left:11px;top:728px;width:1631px;height:21px;background:#e6e6e6"></div>
<div class="a" style="left:18px;top:732px;width:13px;height:13px;border:1px solid #8f8f8f;background:linear-gradient(135deg,#dcdcdc,#fbfbfb)"></div>
<div class="t v" style="left:42px;top:731.70px;color:#7c7c7c">001705/10</div>
<div class="t v" style="right:1653px;top:731.70px;text-align:right;color:#7c7c7c">03-03-2010</div>
<div class="t v" style="left:273px;top:731.70px;color:#7c7c7c">zrealizowane</div>
<div class="t v" style="left:415px;top:731.70px;color:#7c7c7c">(0089) ELEKTRO</div>
<div class="t v" style="left:749px;top:731.70px;color:#7c7c7c"></div>
<div class="t v" style="left:818px;top:731.70px;color:#7c7c7c"></div>
<div class="t v" style="left:1227px;top:731.70px;color:#7c7c7c"></div>
<div class="t v" style="left:1437px;top:731.70px;color:#7c7c7c"></div>
<div class="a" style="left:11px;top:749px;width:1631px;height:21px;background:#e6e6e6"></div>
<div class="a" style="left:18px;top:753px;width:13px;height:13px;border:1px solid #8f8f8f;background:linear-gradient(135deg,#dcdcdc,#fbfbfb)"></div>
<div class="t v" style="left:42px;top:752.70px;color:#7c7c7c">000182/09</div>
<div class="t v" style="right:1653px;top:752.70px;text-align:right;color:#7c7c7c">15-07-2009</div>
<div class="t v" style="left:273px;top:752.70px;color:#7c7c7c">zrealizowane</div>
<div class="t v" style="left:415px;top:752.70px;color:#7c7c7c">(0090) KLIMATEX</div>
<div class="t v" style="left:749px;top:752.70px;color:#7c7c7c"></div>
<div class="t v" style="left:818px;top:752.70px;color:#7c7c7c"></div>
<div class="t v" style="left:1227px;top:752.70px;color:#7c7c7c"></div>
<div class="t v" style="left:1437px;top:752.70px;color:#7c7c7c"></div>
<div class="a" style="left:11px;top:770px;width:1631px;height:21px;background:#e6e6e6"></div>
<div class="a" style="left:18px;top:774px;width:13px;height:13px;border:1px solid #8f8f8f;background:linear-gradient(135deg,#dcdcdc,#fbfbfb)"></div>
<div class="t v" style="left:42px;top:773.70px;color:#7c7c7c">001131/08</div>
<div class="t v" style="right:1653px;top:773.70px;text-align:right;color:#7c7c7c">15-07-2008</div>
<div class="t v" style="left:273px;top:773.70px;color:#7c7c7c">zrealizowane</div>
<div class="t v" style="left:415px;top:773.70px;color:#7c7c7c">(0090) KLIMATEX</div>
<div class="t v" style="left:749px;top:773.70px;color:#7c7c7c"></div>
<div class="t v" style="left:818px;top:773.70px;color:#7c7c7c"></div>
<div class="t v" style="left:1227px;top:773.70px;color:#7c7c7c"></div>
<div class="t v" style="left:1437px;top:773.70px;color:#7c7c7c"></div>
<div class="a" style="left:11px;top:791px;width:1631px;height:21px;background:#e6e6e6"></div>
<div class="a" style="left:18px;top:795px;width:13px;height:13px;border:1px solid #8f8f8f;background:linear-gradient(135deg,#dcdcdc,#fbfbfb)"></div>
<div class="t v" style="left:42px;top:794.70px;color:#7c7c7c">001130/08</div>
<div class="t v" style="right:1653px;top:794.70px;text-align:right;color:#7c7c7c">15-03-2008</div>
<div class="t v" style="left:273px;top:794.70px;color:#7c7c7c">zrealizowane</div>
<div class="t v" style="left:415px;top:794.70px;color:#7c7c7c">(0090) KLIMATEX</div>
<div class="t v" style="left:749px;top:794.70px;color:#7c7c7c"></div>
<div class="t v" style="left:818px;top:794.70px;color:#7c7c7c"></div>
<div class="t v" style="left:1227px;top:794.70px;color:#7c7c7c"></div>
<div class="t v" style="left:1437px;top:794.70px;color:#7c7c7c"></div>
<div class="a" style="left:11px;top:308px;width:1631px;height:1px;background:#d5d6db"></div>
<div class="a" style="left:11px;top:329px;width:1631px;height:1px;background:#d5d6db"></div>
<div class="a" style="left:11px;top:350px;width:1631px;height:1px;background:#d5d6db"></div>
<div class="a" style="left:11px;top:371px;width:1631px;height:1px;background:#d5d6db"></div>
<div class="a" style="left:11px;top:392px;width:1631px;height:1px;background:#d5d6db"></div>
<div class="a" style="left:11px;top:413px;width:1631px;height:1px;background:#d5d6db"></div>
<div class="a" style="left:11px;top:434px;width:1631px;height:1px;background:#d5d6db"></div>
<div class="a" style="left:11px;top:455px;width:1631px;height:1px;background:#d5d6db"></div>
<div class="a" style="left:11px;top:476px;width:1631px;height:1px;background:#d5d6db"></div>
<div class="a" style="left:11px;top:497px;width:1631px;height:1px;background:#d5d6db"></div>
<div class="a" style="left:11px;top:518px;width:1631px;height:1px;background:#d5d6db"></div>
<div class="a" style="left:11px;top:539px;width:1631px;height:1px;background:#d5d6db"></div>
<div class="a" style="left:11px;top:560px;width:1631px;height:1px;background:#d5d6db"></div>
<div class="a" style="left:11px;top:581px;width:1631px;height:1px;background:#d5d6db"></div>
<div class="a" style="left:11px;top:602px;width:1631px;height:1px;background:#d5d6db"></div>
<div class="a" style="left:11px;top:623px;width:1631px;height:1px;background:#d5d6db"></div>
<div class="a" style="left:11px;top:644px;width:1631px;height:1px;background:#d5d6db"></div>
<div class="a" style="left:11px;top:665px;width:1631px;height:1px;background:#d5d6db"></div>
<div class="a" style="left:11px;top:686px;width:1631px;height:1px;background:#d5d6db"></div>
<div class="a" style="left:11px;top:707px;width:1631px;height:1px;background:#d5d6db"></div>
<div class="a" style="left:11px;top:728px;width:1631px;height:1px;background:#d5d6db"></div>
<div class="a" style="left:11px;top:749px;width:1631px;height:1px;background:#d5d6db"></div>
<div class="a" style="left:11px;top:770px;width:1631px;height:1px;background:#d5d6db"></div>
<div class="a" style="left:11px;top:791px;width:1631px;height:1px;background:#d5d6db"></div>
<div class="a" style="left:11px;top:812px;width:1631px;height:1px;background:#d5d6db"></div>
<div class="a" style="left:11px;top:833px;width:1631px;height:1px;background:#d5d6db"></div>
<div class="a" style="left:11px;top:854px;width:1631px;height:1px;background:#d5d6db"></div>
<div class="a" style="left:11px;top:875px;width:1631px;height:1px;background:#d5d6db"></div>
<div class="a" style="left:11px;top:896px;width:1631px;height:1px;background:#d5d6db"></div>
<div class="a" style="left:11px;top:917px;width:1631px;height:1px;background:#d5d6db"></div>
<div class="a" style="left:11px;top:938px;width:1631px;height:1px;background:#d5d6db"></div>
<div class="a" style="left:11px;top:959px;width:1631px;height:1px;background:#d5d6db"></div>
<div class="a" style="left:11px;top:287px;width:1px;height:672px;background:#d5d6db"></div>
<div class="a" style="left:39px;top:287px;width:1px;height:672px;background:#d5d6db"></div>
<div class="a" style="left:181px;top:287px;width:1px;height:672px;background:#d5d6db"></div>
<div class="a" style="left:270px;top:287px;width:1px;height:672px;background:#d5d6db"></div>
<div class="a" style="left:412px;top:287px;width:1px;height:672px;background:#d5d6db"></div>
<div class="a" style="left:621px;top:287px;width:1px;height:672px;background:#d5d6db"></div>
<div class="a" style="left:697px;top:287px;width:1px;height:672px;background:#d5d6db"></div>
<div class="a" style="left:746px;top:287px;width:1px;height:672px;background:#d5d6db"></div>
<div class="a" style="left:815px;top:287px;width:1px;height:672px;background:#d5d6db"></div>
<div class="a" style="left:1224px;top:287px;width:1px;height:672px;background:#d5d6db"></div>
<div class="a" style="left:1433px;top:287px;width:1px;height:672px;background:#d5d6db"></div>
<div class="a" style="left:1642px;top:287px;width:1px;height:672px;background:#d5d6db"></div>
<div class="a" style="left:476px;top:353px;width:1415px;height:655px;background:#ebe7d8;box-shadow:-2px 0 5px rgba(0,0,0,.22),6px 6px 8px rgba(0,0,0,.78);border-right:1px solid #000;border-bottom:1px solid #000;border-left:1px solid #707070;background:#fff"></div>
<div class="a" style="left:477px;top:353px;width:1413px;height:27px;background:#5e8aa2"></div>
<div class="a" style="left:477px;top:380px;width:1397px;height:570px;background:#ebe7d8"></div>
<div class="t ar" style="left:488px;top:359.37px;font-weight:bold;color:#fff;font-size:14px;letter-spacing:.4px">Podgląd zlecenia</div>
<div class="a" style="left:1869px;top:357px;width:17px;height:17px;border:1px solid #6f9ab0;background:#6791a8"></div>
<svg style="left:1872;top:360" width="12" height="12"><path d="M1 1 L11 11 M11 1 L1 11" stroke="#fff" stroke-width="1.6"/></svg>
<div class="t v" style="right:1347px;top:387.70px;text-align:right;">Numer:</div>
<div class="a" style="left:576px;top:385px;width:83px;height:19px;background:#e4e1d2;border:1px solid #dcd9ca;border-top-color:#d6d3c4"></div>
<div class="t ar" style="left:578px;top:387.70px;">000011/15</div>
<div class="t v" style="left:663px;top:387.70px;">Data:</div>
<div class="a" style="left:701px;top:385px;width:96px;height:19px;background:#e4e1d2;border:1px solid #dcd9ca;border-top-color:#d6d3c4"></div>
<div class="t ar" style="left:703px;top:387.70px;">01-04-2015</div>
<svg style="left:775;top:385" width="23" height="20"><defs><linearGradient id="cg" x1="0" y1="0" x2="0" y2="1"><stop offset="0" stop-color="#1c3f86"/><stop offset="1" stop-color="#3a82d8"/></linearGradient></defs><rect x="0.5" y="0.5" width="22" height="19" fill="#e6e3d5" stroke="#d6d3c6"/><rect x="3.5" y="8" width="15" height="11.5" fill="#fff" stroke="#8d8d8d"/><path d="M2 2 L5 1.5 L7.5 2.5 L18.5 3.5 V8.5 H3 Z" fill="url(#cg)"/><path d="M2 1.5 V9" stroke="#444" stroke-width="1"/><text x="11" y="17.5" font-family="Liberation Sans" font-size="8" font-weight="bold" text-anchor="middle" fill="#3a3a3a">14</text></svg>
<div class="t v" style="right:1347px;top:410.70px;text-align:right;">Jednostka:</div>
<div class="a" style="left:576px;top:408px;width:337px;height:19px;background:#e4e1d2;border:1px solid #dcd9ca;border-top-color:#d6d3c4"></div>
<div class="t ar" style="left:578px;top:410.70px;">Dział techniczny</div>
<div class="a" style="left:915px;top:408px;width:163px;height:19px;background:#e4e1d2;border:1px solid #dcd9ca;border-top-color:#d6d3c4"></div>
<div class="t ar" style="left:917px;top:410.70px;">DT</div>
<div class="a" style="left:1081px;top:408px;width:23px;height:19px;background:#e6e3d5;border:1px solid #dedbcd"></div>
<svg style="left:1086.5;top:412" width="12" height="12"><rect x="1.5" y="1.5" width="9" height="9" fill="#f4f4f4" stroke="#555" stroke-width="1.1"/></svg>
<div class="a" style="left:1107px;top:408px;width:23px;height:19px;background:#e6e3d5;border:1px solid #dedbcd"></div>
<svg style="left:1113.5;top:411" width="12" height="14"><path d="M1.5 1.5 L10.5 6.5 L1.5 11.5 Z" fill="#f4f4f4" stroke="#555" stroke-width="1.1"/></svg>
<div class="t v" style="left:1133px;top:410.70px;">Zewnętrzne:</div>
<div class="a" style="left:1220px;top:412px;width:13px;height:13px;border:1px solid #b8bcc6;background:#f3f3f6"></div>
<svg style="left:1222;top:414" width="10" height="10"><path d="M1.5 5 L4 8 L8.5 1" fill="none" stroke="#6b7fa8" stroke-width="1.3"/></svg>
<div class="t v" style="right:1347px;top:433.70px;text-align:right;">Zap.ofert.:</div>
<div class="a" style="left:576px;top:431px;width:137px;height:19px;background:#e4e1d2;border:1px solid #dcd9ca;border-top-color:#d6d3c4"></div>
<div class="a" style="left:715px;top:431px;width:202px;height:19px;background:#e4e1d2;border:1px solid #dcd9ca;border-top-color:#d6d3c4"></div>
<div class="a" style="left:921px;top:431px;width:23px;height:19px;background:#e6e3d5;border:1px solid #dedbcd"></div>
<svg style="left:926.5;top:435" width="12" height="12"><rect x="1.5" y="1.5" width="9" height="9" fill="#f4f4f4" stroke="#555" stroke-width="1.1"/></svg>
<div class="a" style="left:947px;top:431px;width:23px;height:19px;background:#e6e3d5;border:1px solid #dedbcd"></div>
<svg style="left:953.5;top:434" width="12" height="14"><path d="M1.5 1.5 L10.5 6.5 L1.5 11.5 Z" fill="#f4f4f4" stroke="#555" stroke-width="1.1"/></svg>
<div class="t v" style="left:980px;top:433.70px;">Oferta Nr:</div>
<div class="a" style="left:1051px;top:431px;width:137px;height:19px;background:#e4e1d2;border:1px solid #dcd9ca;border-top-color:#d6d3c4"></div>
<div class="t v" style="left:1190px;top:433.70px;">Data:</div>
<div class="a" style="left:1230px;top:431px;width:95px;height:19px;background:#e4e1d2;border:1px solid #dcd9ca;border-top-color:#d6d3c4"></div>
<svg style="left:1303;top:431" width="23" height="20"><defs><linearGradient id="cg" x1="0" y1="0" x2="0" y2="1"><stop offset="0" stop-color="#1c3f86"/><stop offset="1" stop-color="#3a82d8"/></linearGradient></defs><rect x="0.5" y="0.5" width="22" height="19" fill="#e6e3d5" stroke="#d6d3c6"/><rect x="3.5" y="8" width="15" height="11.5" fill="#fff" stroke="#8d8d8d"/><path d="M2 2 L5 1.5 L7.5 2.5 L18.5 3.5 V8.5 H3 Z" fill="url(#cg)"/><path d="M2 1.5 V9" stroke="#444" stroke-width="1"/><text x="11" y="17.5" font-family="Liberation Sans" font-size="8" font-weight="bold" text-anchor="middle" fill="#3a3a3a">14</text></svg>
<div class="t v" style="left:1328px;top:433.70px;">Brutto:</div>
<div class="a" style="left:1378px;top:431px;width:92px;height:19px;background:#e4e1d2;border:1px solid #dcd9ca;border-top-color:#d6d3c4"></div>
<div class="t v" style="right:1347px;top:456.70px;text-align:right;">Kontrahent:</div>
<div class="a" style="left:576px;top:454px;width:337px;height:19px;background:#e4e1d2;border:1px solid #dcd9ca;border-top-color:#d6d3c4"></div>
<div class="t ar" style="left:578px;top:456.70px;">KLIMATEX</div>
<div class="a" style="left:915px;top:454px;width:71px;height:19px;background:#e4e1d2;border:1px solid #dcd9ca;border-top-color:#d6d3c4"></div>
<div class="t ar" style="left:917px;top:456.70px;">0090</div>
<div class="a" style="left:989px;top:454px;width:22px;height:19px;background:#e6e3d5;border:1px solid #dedbcd"></div>
<svg style="left:994.0;top:458" width="12" height="12"><rect x="1.5" y="1.5" width="9" height="9" fill="#f4f4f4" stroke="#555" stroke-width="1.1"/></svg>
<div class="a" style="left:1014px;top:454px;width:23px;height:19px;background:#e6e3d5;border:1px solid #dedbcd"></div>
<svg style="left:1020.5;top:457" width="12" height="14"><path d="M1.5 1.5 L10.5 6.5 L1.5 11.5 Z" fill="#f4f4f4" stroke="#555" stroke-width="1.1"/></svg>
<div class="t v" style="left:1040px;top:456.70px;">Pracownik:</div>
<div class="a" style="left:1116px;top:454px;width:204px;height:19px;background:#e4e1d2;border:1px solid #dcd9ca;border-top-color:#d6d3c4"></div>
<div class="a" style="left:1322px;top:454px;width:104px;height:19px;background:#e4e1d2;border:1px solid #dcd9ca;border-top-color:#d6d3c4"></div>
<div class="a" style="left:1428px;top:454px;width:23px;height:19px;background:#e6e3d5;border:1px solid #dedbcd"></div>
<svg style="left:1433.5;top:458" width="12" height="12"><rect x="1.5" y="1.5" width="9" height="9" fill="#f4f4f4" stroke="#555" stroke-width="1.1"/></svg>
<div class="a" style="left:1454px;top:454px;width:23px;height:19px;background:#e6e3d5;border:1px solid #dedbcd"></div>
<svg style="left:1460.5;top:457" width="12" height="14"><path d="M1.5 1.5 L10.5 6.5 L1.5 11.5 Z" fill="#f4f4f4" stroke="#555" stroke-width="1.1"/></svg>
<div class="t v" style="right:1347px;top:479.70px;text-align:right;">Umowa:</div>
<div class="a" style="left:576px;top:477px;width:337px;height:19px;background:#e4e1d2;border:1px solid #dcd9ca;border-top-color:#d6d3c4"></div>
<div class="t ar" style="left:578px;top:479.70px;">78/T/10</div>
<div class="a" style="left:916px;top:477px;width:22px;height:19px;background:#e6e3d5;border:1px solid #dedbcd"></div>
<svg style="left:921.0;top:481" width="12" height="12"><rect x="1.5" y="1.5" width="9" height="9" fill="#f4f4f4" stroke="#555" stroke-width="1.1"/></svg>
<div class="a" style="left:941px;top:477px;width:23px;height:19px;background:#e6e3d5;border:1px solid #dedbcd"></div>
<svg style="left:947.5;top:480" width="12" height="14"><path d="M1.5 1.5 L10.5 6.5 L1.5 11.5 Z" fill="#f4f4f4" stroke="#555" stroke-width="1.1"/></svg>
<div class="t v" style="right:1347px;top:621.70px;text-align:right;">Pozycje:</div>
<div class="a" style="left:576px;top:501px;width:1273px;height:257px;background:#fff"></div>
<div class="a" style="left:576px;top:501px;width:1273px;height:24px;background:#c9c4a8"></div>
<div class="a" style="left:758px;top:501px;width:1px;height:24px;background:#dcd7c0"></div>
<div class="a" style="left:900px;top:501px;width:1px;height:24px;background:#dcd7c0"></div>
<div class="a" style="left:1096px;top:501px;width:1px;height:24px;background:#dcd7c0"></div>
<div class="a" style="left:1358px;top:501px;width:1px;height:24px;background:#dcd7c0"></div>
<div class="a" style="left:1820px;top:501px;width:1px;height:24px;background:#dcd7c0"></div>
<div class="t hb" style="left:581px;top:504.70px;">Rodzaj/P.aw./Cena przew.</div>
<div class="t hb" style="left:763px;top:504.70px;">Zgłoszenie/Czynność</div>
<div class="t hb" style="left:905px;top:504.70px;">Składnik</div>
<div class="t hb" style="left:1101px;top:504.70px;">Paszport/Miejsce użytkowania/Opk</div>
<div class="t hb" style="left:1363px;top:504.70px;">Opis</div>
<div class="t ar" style="left:1826px;top:504.70px;color:#1f2a24">Gw</div>
<div class="a" style="left:576px;top:525px;width:1273px;height:53px;background:#edf3f8"></div>
<div class="a" style="left:576px;top:578px;width:1273px;height:1px;background:#d5d6db"></div>
<div class="a" style="left:576px;top:631px;width:1273px;height:1px;background:#d5d6db"></div>
<div class="a" style="left:576px;top:684px;width:1273px;height:1px;background:#d5d6db"></div>
<div class="a" style="left:576px;top:737px;width:1273px;height:1px;background:#d5d6db"></div>
<div class="a" style="left:758px;top:525px;width:1px;height:212px;background:#d5d6db"></div>
<div class="a" style="left:900px;top:525px;width:1px;height:212px;background:#d5d6db"></div>
<div class="a" style="left:1096px;top:525px;width:1px;height:212px;background:#d5d6db"></div>
<div class="a" style="left:1358px;top:525px;width:1px;height:212px;background:#d5d6db"></div>
<div class="a" style="left:1820px;top:525px;width:1px;height:212px;background:#d5d6db"></div>
<div class="t v" style="left:579px;top:528.70px;">naprawa</div>
<div class="t v" style="left:762px;top:528.70px;">0007/15</div>
<div class="t v" style="left:903px;top:528.70px;">(45006566) Klimatyzator</div>
<div class="t v" style="left:903px;top:544.70px;">przenośny Sharp</div>
<div class="t v" style="left:903px;top:560.70px;">Plasmacluster CV-P 09 FR</div>
<div class="t v" style="left:1099px;top:528.70px;">6667</div>
<div class="t v" style="left:1099px;top:544.70px;">Oddział Chirurgii Ogólnej</div>
<div class="t v" style="left:1361px;top:528.70px;">nie działa</div>
<div class="t ar" style="left:587px;top:739.70px;font-style:italic;color:#777">1</div>
<div class="t ar" style="right:80px;top:739.70px;text-align:right;font-style:italic;color:#777;letter-spacing:.6px">1/1</div>
<svg style="left:1155;top:740" width="120" height="18"><defs><linearGradient id="ng1155" x1="0" y1="0" x2="0" y2="1"><stop offset="0" stop-color="#dfe9ea"/><stop offset="0.5" stop-color="#a9bfc3"/><stop offset="1" stop-color="#cfdcde"/></linearGradient></defs><rect x="0" y="0" width="2.2" height="16" fill="#4f666c"/><path d="M2.5 8 L10.5 0.5 V4 H16.5 V12 H10.5 V15.5 Z" fill="url(#ng1155)" stroke="#5b747b" stroke-width="0.9"/><path d="M25 8 L35 0.5 V4 H40.5 V12 H35 V15.5 Z" fill="url(#ng1155)" stroke="#5b747b" stroke-width="0.9"/><path d="M50.5 4 H56 V0.5 L66 8 L56 15.5 V12 H50.5 Z" fill="url(#ng1155)" stroke="#5b747b" stroke-width="0.9"/><path d="M75.5 4 H81.5 V0.5 L89.5 8 L81.5 15.5 V12 H75.5 Z" fill="url(#ng1155)" stroke="#5b747b" stroke-width="0.9"/><rect x="89.8" y="0" width="2.2" height="16" fill="#4f666c"/><path d="M102 6.5 A6.2 6.2 0 0 1 113.5 4.5" fill="none" stroke="#5b747b" stroke-width="3.2"/><path d="M102 6.5 A6.2 6.2 0 0 1 113.5 4.5" fill="none" stroke="#dfe9ea" stroke-width="1.4"/><path d="M114 9.5 A6.2 6.2 0 0 1 102.5 11.5" fill="none" stroke="#5b747b" stroke-width="3.2"/><path d="M114 9.5 A6.2 6.2 0 0 1 102.5 11.5" fill="none" stroke="#b9cdd0" stroke-width="1.4"/><path d="M109.5 6 L115.5 6.5 L115 0.5 Z M106.5 10 L100.5 9.5 L101 15.5 Z" fill="#5b747b"/></svg>
<div class="a" style="left:1856px;top:676px;width:18px;height:83px;background:#f0efe8;border-left:1px solid #dcdad0"></div>
<svg style="left:1857;top:678" width="18" height="80"><rect x="1.5" y="1.5" width="15" height="15" fill="#c9d3d6" stroke="#8d9aa0"/><rect x="2.5" y="2.5" width="13" height="13" fill="none" stroke="#eef3f4"/><path d="M5.5 5.5 L11.5 11.5 M12.5 6.5 V12.5 H6.5" fill="none" stroke="#5b757c" stroke-width="2.2"/><rect x="1.5" y="24.5" width="14" height="14" fill="#eeeeee" stroke="#8c8c8c"/><path d="M2.5 37.5 H14.5 V26" fill="none" stroke="#d8d8de"/><circle cx="14.5" cy="25.5" r="2.8" fill="#f3ec62"/><rect x="1.5" y="44.5" width="14" height="13" fill="#f3f3f3" stroke="#8c8c8c"/><path d="M3.5 49.5 H12 M3.5 52.5 H10" stroke="#c9c9c9"/><rect x="2" y="43" width="13" height="2.5" fill="#e6d25a"/><circle cx="3" cy="43" r="0.9" fill="#bfa93a"/><circle cx="5" cy="43" r="0.9" fill="#bfa93a"/><circle cx="7" cy="43" r="0.9" fill="#bfa93a"/><circle cx="9" cy="43" r="0.9" fill="#bfa93a"/><circle cx="11" cy="43" r="0.9" fill="#bfa93a"/><circle cx="13" cy="43" r="0.9" fill="#bfa93a"/><circle cx="15" cy="43" r="0.9" fill="#bfa93a"/><path d="M5.5 54.5 L14.5 45.5 L17 48 L8 57 L5 57.8 Z" fill="#cfa24e" stroke="#3f3222" stroke-width="0.9"/><path d="M5 57.8 L6 55 L7.8 56.7 Z" fill="#222"/><rect x="1.5" y="60.5" width="15" height="15" fill="#fbfbfb" stroke="#8c8c8c"/><path d="M6 65.5 L11 70 M11 65.5 L6 70" stroke="#cc1a1a" stroke-width="1.8"/></svg>
<div class="t v" style="right:1347px;top:764.70px;text-align:right;">Koszt przew.:</div>
<div class="a" style="left:576px;top:762px;width:92px;height:19px;background:#e4e1d2;border:1px solid #dcd9ca;border-top-color:#d6d3c4"></div>
<div class="t ar" style="left:672px;top:764.70px;">zł</div>
<div class="t v" style="right:1347px;top:787.70px;text-align:right;">Operator:</div>
<div class="a" style="left:576px;top:785px;width:203px;height:19px;background:#e4e1d2;border:1px solid #dcd9ca;border-top-color:#d6d3c4"></div>
<div class="t ar" style="left:578px;top:787.70px;">Kieł</div>
<div class="a" style="left:782px;top:785px;width:103px;height:19px;background:#e4e1d2;border:1px solid #dcd9ca;border-top-color:#d6d3c4"></div>
<div class="t ar" style="left:784px;top:787.70px;">Olaf</div>
<div class="a" style="left:887px;top:785px;width:23px;height:19px;background:#e6e3d5;border:1px solid #dedbcd"></div>
<svg style="left:892.5;top:789" width="12" height="12"><rect x="1.5" y="1.5" width="9" height="9" fill="#f4f4f4" stroke="#555" stroke-width="1.1"/></svg>
<div class="a" style="left:914px;top:785px;width:23px;height:19px;background:#e6e3d5;border:1px solid #dedbcd"></div>
<svg style="left:920.5;top:788" width="12" height="14"><path d="M1.5 1.5 L10.5 6.5 L1.5 11.5 Z" fill="#f4f4f4" stroke="#555" stroke-width="1.1"/></svg>
<div class="t v" style="right:1347px;top:810.70px;text-align:right;">Stan:</div>
<div class="a" style="left:576px;top:808px;width:136px;height:19px;background:#e4e1d2;border:1px solid #dcd9ca;border-top-color:#d6d3c4"></div>
<div class="t ar" style="left:578px;top:810.70px;">otwarte</div>
<div class="a" style="left:715px;top:808px;width:23px;height:19px;background:#e6e3d5;border:1px solid #dedbcd"></div>
<svg style="left:720.5;top:812" width="12" height="12"><rect x="1.5" y="1.5" width="9" height="9" fill="#f4f4f4" stroke="#555" stroke-width="1.1"/></svg>
<div class="a" style="left:741px;top:808px;width:23px;height:19px;background:#e6e3d5;border:1px solid #dedbcd"></div>
<svg style="left:746.5;top:812" width="14" height="12"><path d="M1.5 1.5 H11.5 L6.5 10.5 Z" fill="#f4f4f4" stroke="#555" stroke-width="1.1"/></svg>
<div class="t v" style="left:767px;top:810.70px;">Data zmiany stanu:</div>
<div class="a" style="left:901px;top:808px;width:95px;height:19px;background:#e4e1d2;border:1px solid #dcd9ca;border-top-color:#d6d3c4"></div>
<div class="t ar" style="left:903px;top:810.70px;">01-04-2015</div>
<svg style="left:974;top:808" width="23" height="20"><defs><linearGradient id="cg" x1="0" y1="0" x2="0" y2="1"><stop offset="0" stop-color="#1c3f86"/><stop offset="1" stop-color="#3a82d8"/></linearGradient></defs><rect x="0.5" y="0.5" width="22" height="19" fill="#e6e3d5" stroke="#d6d3c6"/><rect x="3.5" y="8" width="15" height="11.5" fill="#fff" stroke="#8d8d8d"/><path d="M2 2 L5 1.5 L7.5 2.5 L18.5 3.5 V8.5 H3 Z" fill="url(#cg)"/><path d="M2 1.5 V9" stroke="#444" stroke-width="1"/><text x="11" y="17.5" font-family="Liberation Sans" font-size="8" font-weight="bold" text-anchor="middle" fill="#3a3a3a">14</text></svg>
<div class="t v" style="left:1000px;top:810.70px;">Zamknięte:</div>
<div class="a" style="left:1079px;top:812px;width:13px;height:13px;border:1px solid #b8bcc6;background:#f3f3f6"></div>
<div class="t v" style="right:1347px;top:879.70px;text-align:right;">Hist. stanów:</div>
<div class="a" style="left:577px;top:832px;width:280px;height:109px;background:#fff"></div>
<div class="a" style="left:577px;top:832px;width:280px;height:25px;background:#c9c4a8"></div>
<div class="a" style="left:719px;top:832px;width:1px;height:25px;background:#dcd7c0"></div>
<div class="a" style="left:821px;top:832px;width:1px;height:25px;background:#dcd7c0"></div>
<div class="t hb" style="left:582px;top:836.70px;">Nazwa</div>
<div class="t hb" style="left:724px;top:836.70px;">Data zmiany</div>
<div class="t hb" style="left:826px;top:836.70px;">Zam</div>
<div class="a" style="left:577px;top:857px;width:280px;height:21px;background:#edf3f8"></div>
<div class="a" style="left:577px;top:878px;width:280px;height:1px;background:#d5d6db"></div>
<div class="a" style="left:577px;top:899px;width:280px;height:1px;background:#d5d6db"></div>
<div class="a" style="left:577px;top:920px;width:280px;height:1px;background:#d5d6db"></div>
<div class="a" style="left:719px;top:857px;width:1px;height:63px;background:#d5d6db"></div>
<div class="a" style="left:821px;top:857px;width:1px;height:63px;background:#d5d6db"></div>
<div class="t v" style="left:580px;top:860.70px;">otwarte</div>
<div class="t v" style="right:1102px;top:860.70px;text-align:right;">01-04-2015</div>
<div class="t ar" style="left:588px;top:922.70px;font-style:italic;color:#777">1</div>
<div class="t ar" style="right:1071px;top:922.70px;text-align:right;font-style:italic;color:#777;letter-spacing:.6px">1/1</div>
<svg style="left:660;top:922" width="120" height="18"><defs><linearGradient id="ng660" x1="0" y1="0" x2="0" y2="1"><stop offset="0" stop-color="#dfe9ea"/><stop offset="0.5" stop-color="#a9bfc3"/><stop offset="1" stop-color="#cfdcde"/></linearGradient></defs><rect x="0" y="0" width="2.2" height="16" fill="#4f666c"/><path d="M2.5 8 L10.5 0.5 V4 H16.5 V12 H10.5 V15.5 Z" fill="url(#ng660)" stroke="#5b747b" stroke-width="0.9"/><path d="M25 8 L35 0.5 V4 H40.5 V12 H35 V15.5 Z" fill="url(#ng660)" stroke="#5b747b" stroke-width="0.9"/><path d="M50.5 4 H56 V0.5 L66 8 L56 15.5 V12 H50.5 Z" fill="url(#ng660)" stroke="#5b747b" stroke-width="0.9"/><path d="M75.5 4 H81.5 V0.5 L89.5 8 L81.5 15.5 V12 H75.5 Z" fill="url(#ng660)" stroke="#5b747b" stroke-width="0.9"/><rect x="89.8" y="0" width="2.2" height="16" fill="#4f666c"/><path d="M102 6.5 A6.2 6.2 0 0 1 113.5 4.5" fill="none" stroke="#5b747b" stroke-width="3.2"/><path d="M102 6.5 A6.2 6.2 0 0 1 113.5 4.5" fill="none" stroke="#dfe9ea" stroke-width="1.4"/><path d="M114 9.5 A6.2 6.2 0 0 1 102.5 11.5" fill="none" stroke="#5b747b" stroke-width="3.2"/><path d="M114 9.5 A6.2 6.2 0 0 1 102.5 11.5" fill="none" stroke="#b9cdd0" stroke-width="1.4"/><path d="M109.5 6 L115.5 6.5 L115 0.5 Z M106.5 10 L100.5 9.5 L101 15.5 Z" fill="#5b747b"/></svg>
<div class="t v" style="left:864px;top:879.70px;">Komentarz:</div>
<div class="a" style="left:944px;top:846px;width:536px;height:82px;background:#e3e2d3;border:1px solid #c9d0d2"></div>
<svg style="left:1468;top:916" width="10" height="10"><path d="M1 9 L9 1 M5 9 L9 5" stroke="#666" stroke-width="1"/></svg>
<div class="a" style="left:1484px;top:877px;width:25px;height:19px;background:#e6e3d5;border:1px solid #dedbcd"></div>
<svg style="left:1491.5;top:880" width="12" height="14"><path d="M1.5 1.5 L10.5 6.5 L1.5 11.5 Z" fill="#f4f4f4" stroke="#555" stroke-width="1.1"/></svg>
<div class="a" style="left:477px;top:950px;width:1396px;height:42px;background:#f2f3f5;border-top:1px solid #8f979d"></div>
<div class="a" style="left:1148px;top:956px;width:67px;height:30px;background:#f4f5f7;border:1px solid #c98a5c"></div>
<div class="t v" style="left:1148.0px;width:67px;top:963.70px;text-align:center;">Zamknij</div>
<div class="a" style="left:1873px;top:380px;width:15px;height:612px;background:#f1f1f1"></div>
<div class="a" style="left:1875px;top:397px;width:13px;height:575px;background:#c1c1c1"></div>
<svg style="left:1877;top:386" width="9" height="6"><path d="M0.5 5 L4.5 1 L8.5 5 Z" fill="#a3a3a3"/></svg>
<svg style="left:1877;top:978" width="9" height="6"><path d="M0.5 1 L4.5 5 L8.5 1 Z" fill="#505050"/></svg>
<div class="a" style="left:477px;top:992px;width:1396px;height:14px;background:#f1f1f1"></div>
<div class="a" style="left:494px;top:992px;width:1350px;height:13px;background:#c1c1c1"></div>
<svg style="left:482;top:994" width="6" height="9"><path d="M5 0.5 L1 4.5 L5 8.5 Z" fill="#a3a3a3"/></svg>
<svg style="left:1861;top:994" width="6" height="9"><path d="M1 0.5 L5 4.5 L1 8.5 Z" fill="#505050"/></svg>
<div class="a" style="left:1873px;top:992px;width:15px;height:14px;background:#fff"></div>
<div class="a" style="left:0px;top:1017px;width:1920px;height:23px;background:#f2f3f6;border-top:1px solid #8a8e96"></div>
<div class="t v" style="left:6px;top:1021.70px;">Florian Majchrzak</div>
<div class="t v" style="left:808.0px;width:300px;top:1021.70px;text-align:center;">Aplikacja Prezentacyjna</div>
<svg style="left:1798;top:1017" width="100" height="22"><text x="1" y="14.6" font-family="Liberation Sans" font-size="12.5" textLength="93" lengthAdjust="spacingAndGlyphs" fill="#555"><tspan fill="#2a6477">G</tspan>axam</text></svg>
<svg style="left:1893;top:1019" width="24" height="22"><circle cx="5.3" cy="2.8" r="3.2" fill="#1f6e8c"/><circle cx="17.9" cy="9.9" r="3.2" fill="#1f6e8c"/><circle cx="6.3" cy="12.9" r="2.2" fill="#2b7f90"/><circle cx="3.3" cy="18.3" r="1.4" fill="#4a7080"/></svg>
</body></html>
